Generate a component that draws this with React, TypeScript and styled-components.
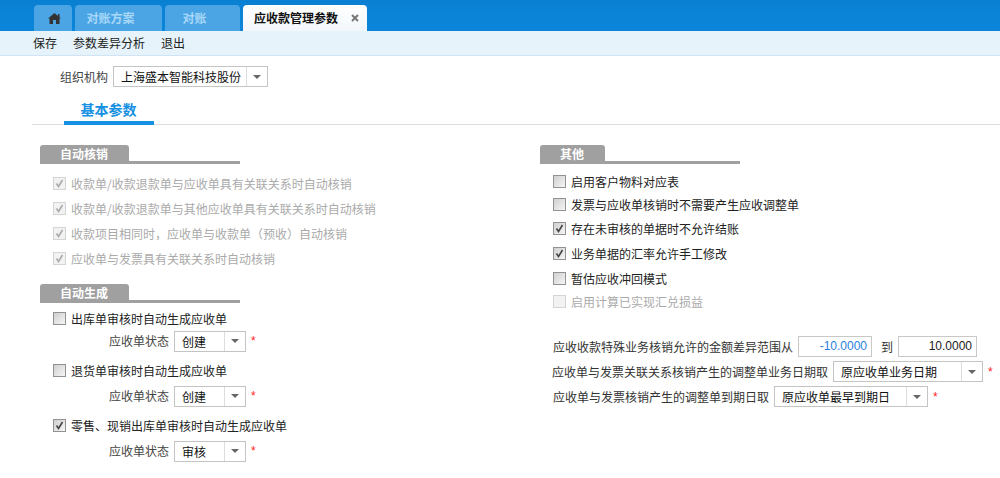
import React from "react";
import styled, { createGlobalStyle } from "styled-components";

const Global = createGlobalStyle`
  html, body { margin: 0; padding: 0; background: #fff; overflow: hidden; }
  body { font-family: "Noto Sans CJK SC", "Liberation Sans", sans-serif; font-size: 12px; color: #222; }
`;
const Page = styled.div`width: 1000px; height: 478px; display: flex; flex-direction: column;`;
const TabBar = styled.div`
  height: 31px; box-sizing: border-box; padding: 5px 0 0 34px; display: flex; gap: 3px;
  background: linear-gradient(#0a80d2, #0b86da);
`;
const Tab = styled.div<{ $w: number }>`
  width: ${p => p.$w}px; height: 26px; box-sizing: border-box; border-radius: 4px 4px 0 0;
  display: flex; align-items: center; justify-content: center; padding-right: 16px;
  line-height: 26px; font-size: 12px; font-weight: 700;
  background: #4ba5e4; color: #a8d8f8;
`;
const HomeTab = styled(Tab)`padding: 0 0 0 2px;`;
const ActiveTab = styled(Tab)`
  justify-content: flex-start; padding: 0 0 0 11px; gap: 13px;
  background: linear-gradient(#fff, #f2f7fb); color: #111;
`;
const Toolbar = styled.div`
  height: 25px; box-sizing: border-box; background: #e6f3fb; border-bottom: 1px solid #cfe4f4;
  display: flex; align-items: center; padding-left: 33px; gap: 16px; color: #222; line-height: 24px;
`;
const OrgRow = styled.div`display: flex; align-items: center; padding: 10px 0 0 60px; gap: 5px; height: 21px;`;
const Label = styled.span`color: #444; line-height: 16px; white-space: nowrap;`;
const Select = styled.div<{ $w: number }>`
  width: ${p => p.$w}px; height: 21px; box-sizing: border-box; border: 1px solid #c4c4c4; background: #fff;
  display: flex; flex: none; color: #111; line-height: 19px;
`;
const SelectText = styled.div`flex: 1; padding-left: 7px; white-space: nowrap; overflow: hidden;`;
const Arrow = styled.div`
  width: 20px; border-left: 1px solid #ddd; display: flex; align-items: center; justify-content: center;
  &::after { content: ""; border: 4px solid transparent; border-top: 4px solid #666; border-bottom: 0; }
`;
const Star = styled.span<{ $m: number }>`
  color: #f22; font-size: 12px; line-height: 14px; margin-left: ${p => p.$m}px; font-family: "Liberation Sans", sans-serif;
`;
const SubTabs = styled.div`
  margin: 13px 0 0 32px; height: 25px; box-sizing: border-box; border-bottom: 1px solid #ddd;
`;
const SubTab = styled.div`
  margin-left: 32px; width: 90px; height: 25px; box-sizing: border-box; border-bottom: 4px solid #1590e2; padding-right: 1px;
  text-align: center; color: #1590e2; font-size: 14px; font-weight: 700; line-height: 19px;
`;
const Columns = styled.div`display: grid; grid-template-columns: 500px 1fr; padding: 20px 0 0 40px;`;
const Col = styled.div`display: flex; flex-direction: column;`;
const SectionHead = styled.div<{ $w: number }>`
  width: 200px; height: 19px; box-sizing: border-box; border-bottom: 3px solid #a0a0a0; flex: none;
  & > span {
    display: block; width: ${p => p.$w}px; height: 19px; background: #a0a0a0; border-radius: 3px 3px 0 0;
    color: #fff; font-weight: 700; font-size: 12px; line-height: 18px; padding-left: 20px; box-sizing: border-box;
  }
`;
const Row = styled.label<{ $h?: number; $disabled?: boolean }>`
  height: ${p => p.$h ?? 25}px; display: flex; align-items: center; padding-left: 13px; gap: 5px;
  color: ${p => (p.$disabled ? "#aaa" : "#222")}; white-space: nowrap;
`;
const Box = styled.span<{ $disabled?: boolean }>`
  width: 13px; height: 13px; box-sizing: border-box; flex: none; display: block;
  border: 1px solid ${p => (p.$disabled ? "#d4d4d4" : "#929292")};
  background: ${p => (p.$disabled ? "#f2f2f2" : "linear-gradient(135deg, #cfcfcf, #f6f6f6)")};
  & svg { display: block; }
`;
const SubRow = styled.div<{ $h: number }>`
  height: ${p => p.$h}px; display: flex; align-items: center; padding-left: 69px; gap: 5px;
`;
const Gap = styled.div<{ $h: number }>`height: ${p => p.$h}px; flex: none;`;
const LineRow = styled.div<{ $pad?: number; $gap?: number }>`
  height: 25px; display: flex; align-items: center; padding-left: ${p => p.$pad ?? 13}px; gap: ${p => p.$gap ?? 5}px;
  white-space: nowrap; color: #333;
`;
const NumInput = styled.div<{ $w: number; $blue?: boolean; $after?: number }>`
  width: ${p => p.$w}px; height: 21px; box-sizing: border-box; border: 1px solid #c8c8c8; text-align: right; padding-right: 4px;
  line-height: 19px; font-family: "Liberation Sans", sans-serif; color: ${p => (p.$blue ? "#2a7fe0" : "#222")}; flex: none;
  margin-right: ${p => p.$after ?? 0}px;
`;

const Check = ({ on, disabled }: { on?: boolean; disabled?: boolean }) => (
  <Box $disabled={disabled}>
    {on && (
      <svg width="11" height="11" viewBox="0 0 11 11">
        <path d="M2.5 5.5 L4.5 8.5 L8.5 2" fill="none" stroke={disabled ? "#aaa" : "#444"} strokeWidth="1.6" />
      </svg>
    )}
  </Box>
);
const CheckRow = ({ text, on, disabled, h }: { text: string; on?: boolean; disabled?: boolean; h?: number }) => (
  <Row $h={h} $disabled={disabled}>
    <Check on={on} disabled={disabled} />
    {text}
  </Row>
);
const Sel = ({ w, text }: { w: number; text: string }) => (
  <Select $w={w}><SelectText>{text}</SelectText><Arrow /></Select>
);
const StateRow = ({ text, h }: { text: string; h: number }) => (
  <SubRow $h={h}>
    <Label>应收单状态</Label>
    <Sel w={72} text={text} />
    <Star $m={0}>*</Star>
  </SubRow>
);

export default function App() {
  return (
    <Page>
      <Global />
      <TabBar>
        <HomeTab $w={38}>
          <svg width="13" height="11" viewBox="0 0 13 11">
            <path d="M6.5 0 L10 3 V1 H11.5 V4.3 L13 5.6 H11.5 V11 H8 V7 H5 V11 H1.5 V5.6 H0 Z" fill="#333" />
          </svg>
        </HomeTab>
        <Tab $w={87}>对账方案</Tab>
        <Tab $w={75}>对账</Tab>
        <ActiveTab $w={124}>
          应收款管理参数
          <svg width="8" height="8" viewBox="0 0 8 8">
            <path d="M1 1 L7 7 M7 1 L1 7" stroke="#777" strokeWidth="2" fill="none" />
          </svg>
        </ActiveTab>
      </TabBar>
      <Toolbar>
        <span>保存</span><span>参数差异分析</span><span>退出</span>
      </Toolbar>
      <OrgRow>
        <Label>组织机构</Label>
        <Sel w={155} text="上海盛本智能科技股份" />
      </OrgRow>
      <SubTabs><SubTab>基本参数</SubTab></SubTabs>
      <Columns>
        <Col>
          <SectionHead $w={89}><span>自动核销</span></SectionHead>
          <Gap $h={7} />
          <CheckRow on disabled text="收款单/收款退款单与应收单具有关联关系时自动核销" />
          <CheckRow on disabled text="收款单/收款退款单与其他应收单具有关联关系时自动核销" />
          <CheckRow on disabled text="收款项目相同时，应收单与收款单（预收）自动核销" />
          <CheckRow on disabled text="应收单与发票具有关联关系时自动核销" />
          <Gap $h={13} />
          <SectionHead $w={89}><span>自动生成</span></SectionHead>
          <Gap $h={4} />
          <CheckRow h={22} text="出库单审核时自动生成应收单" />
          <StateRow h={24} text="创建" />
          <Gap $h={5} />
          <CheckRow h={24} text="退货单审核时自动生成应收单" />
          <StateRow h={28} text="创建" />
          <Gap $h={3} />
          <CheckRow h={24} text="零售、现销出库单审核时自动生成应收单" on />
          <StateRow h={28} text="审核" />
        </Col>
        <Col>
          <SectionHead $w={65}><span>其他</span></SectionHead>
          <Gap $h={5} />
          <CheckRow h={24} text="启用客户物料对应表" />
          <CheckRow h={23} text="发票与应收单核销时不需要产生应收调整单" />
          <CheckRow text="存在未审核的单据时不允许结账" on />
          <CheckRow text="业务单据的汇率允许手工修改" on />
          <CheckRow text="暂估应收冲回模式" />
          <CheckRow h={21} text="启用计算已实现汇兑损益" disabled />
          <Gap $h={22} />
          <LineRow>
            应收收款特殊业务核销允许的金额差异范围从
            <NumInput $w={74} $blue $after={4}>-10.0000</NumInput>
            到
            <NumInput $w={79}>10.0000</NumInput>
          </LineRow>
          <LineRow $pad={12}>
            应收单与发票关联关系核销产生的调整单业务日期取
            <Sel w={150} text="原应收单业务日期" />
            <Star $m={0}>*</Star>
          </LineRow>
          <LineRow>
            应收单与发票核销产生的调整单到期日取
            <Sel w={154} text="原应收单最早到期日" />
            <Star $m={0}>*</Star>
          </LineRow>
        </Col>
      </Columns>
    </Page>
  );
}
